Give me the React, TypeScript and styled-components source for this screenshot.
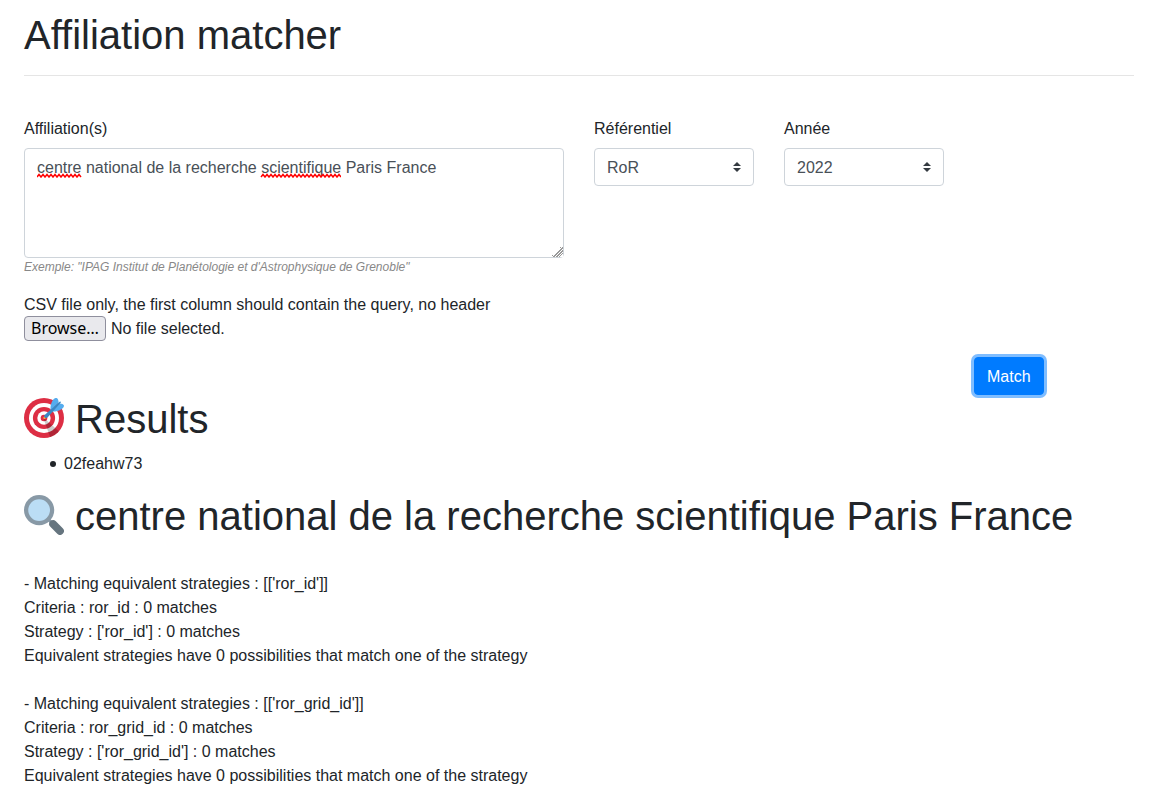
import React, { useState } from "react";
import styled, { createGlobalStyle } from "styled-components";

const GlobalStyle = createGlobalStyle`
  *, *::before, *::after { box-sizing: border-box; }
  body {
    margin: 0;
    background: #fff;
    color: #212529;
    font-family: "Liberation Sans", Arial, sans-serif;
    font-size: 16px;
    line-height: 24px;
  }
`;

const Page = styled.main`
  max-width: 1158px;
  padding: 11px 24px 0;
`;

const Title = styled.h1`
  margin: 0 0 8px;
  font-size: 40px;
  font-weight: 500;
  line-height: 48px;
`;

const IconTitle = styled(Title)`
  display: flex;
  align-items: center;
  gap: 11px;
`;

const TitleIcon = styled.svg`
  flex: none;
  width: 40px;
  height: 40px;
  margin-bottom: 2px;
`;

const Divider = styled.hr`
  margin: 16px 0 41px;
  border: 0;
  border-top: 1px solid rgba(0, 0, 0, 0.1);
`;

const FormGrid = styled.form`
  display: grid;
  grid-template-columns: repeat(12, minmax(0, 1fr));
  column-gap: 30px;
  row-gap: 16px;
`;

const Cell = styled.div<{ $span: number; $start?: number }>`
  grid-column: ${(p) => (p.$start ? `${p.$start} / ` : "")}span ${(p) => p.$span};
`;

const FileCell = styled(Cell)`
  padding-top: 1px;
`;

const ActionRow = styled.div`
  grid-column: 1 / -1;
  display: grid;
  grid-template-columns: subgrid;
`;

const Label = styled.label`
  display: block;
  margin-bottom: 7px;
`;

const TextWrap = styled.div`
  position: relative;
`;

const TextArea = styled.textarea`
  display: block;
  width: 100%;
  height: 110px;
  padding: 7px 12px 5px;
  border: 1px solid #ced4da;
  border-radius: 4px;
  background: #fff;
  color: #495057;
  font: inherit;
  resize: vertical;

  &::-webkit-resizer {
    background:
      linear-gradient(315deg, #fff 1px, transparent 1px),
      linear-gradient(135deg, #fff 60%, transparent 60%),
      repeating-linear-gradient(135deg, #999 0 1px, #fff 1px 2px);
  }
`;

const SpellMarks = styled.svg`
  position: absolute;
  top: 25px;
  left: 13px;
  width: 304px;
  height: 5px;
  pointer-events: none;
`;

const Hint = styled.small`
  display: block;
  color: #888;
  font-size: 12px;
  font-style: italic;
  line-height: 18px;
`;

const SelectWrap = styled.div`
  position: relative;
`;

const Select = styled.select`
  display: block;
  width: 100%;
  height: 38px;
  padding: 7px 28px 5px 12px;
  border: 1px solid #ced4da;
  border-radius: 4px;
  background: #fff;
  color: #495057;
  font: inherit;
  appearance: none;
`;

const SelectArrows = styled.svg`
  position: absolute;
  top: 14px;
  right: 13px;
  width: 8px;
  height: 10px;
  pointer-events: none;
`;

const FileRow = styled.div`
  display: flex;
  align-items: flex-end;
  gap: 5px;
  height: 24px;
`;

const BrowseLabel = styled.label`
  height: 25px;
  padding: 0 6px;
  border: 1px solid #8f8f9d;
  border-radius: 4px;
  background: #e9e9ed;
  color: #000;
  font-family: "Noto Sans", sans-serif;
  line-height: 23px;
`;

const FileInput = styled.input`
  position: absolute;
  width: 1px;
  height: 1px;
  opacity: 0;
`;

const MatchButton = styled.button`
  grid-column: 11 / span 2;
  justify-self: start;
  height: 38px;
  padding: 7px 12px 5px;
  border: 1px solid #007bff;
  border-radius: 4px;
  background: #007bff;
  box-shadow: 0 0 0 3px rgba(0, 123, 255, 0.5);
  color: #fff;
  font: inherit;
`;

const ResultList = styled.ul`
  margin: 0 0 16px;
  padding: 1px 0 0 26px;
  list-style: none;
`;

const ResultItem = styled.li`
  display: flex;
  align-items: center;
  gap: 8px;

  &::before {
    content: "";
    width: 6px;
    height: 6px;
    border-radius: 50%;
    background: #212529;
  }
`;

const Report = styled.section`
  padding-bottom: 8px;
  display: flow-root;
`;

const Strategy = styled.p`
  margin: 24px 0 0;
`;

const Line = styled.span`
  display: block;
`;

function DartIcon() {
  return (
    <TitleIcon viewBox="0 0 36 36" aria-hidden="true">
      <circle fill="#DD2E44" cx="18" cy="18" r="18" />
      <circle fill="#FFF" cx="18" cy="18" r="13.5" />
      <circle fill="#DD2E44" cx="18" cy="18" r="10" />
      <circle fill="#FFF" cx="18" cy="18" r="6" />
      <circle fill="#DD2E44" cx="18" cy="18" r="3" />
      <path opacity=".2" d="M18.24 18.282l13.144 11.754s-2.647 3.376-7.89 5.109L17.579 18.42l.661-.138z" />
      <path fill="#FFAC33" d="M18.294 19c-.255 0-.509-.097-.704-.292-.389-.389-.389-1.018 0-1.407l.563-.563c.389-.389 1.018-.389 1.408 0 .388.389.388 1.018 0 1.407l-.564.563c-.194.195-.448.292-.703.292z" />
      <path fill="#55ACEE" d="M24.016 6.981c-.403 2.079 0 4.691 0 4.691l7.054-7.388c.291-1.454-.528-3.932-1.718-4.238-1.19-.306-4.079.803-5.336 6.935zm5.003 5.003c-2.079.403-4.691 0-4.691 0l7.388-7.054c1.454-.291 3.932.528 4.238 1.718.306 1.19-.803 4.079-6.935 5.336z" />
      <path fill="#3A87C2" d="M32.798 4.485L21.176 17.587c-.362.362-1.673.882-2.51.046-.836-.836-.419-2.08-.057-2.443L31.815 3.501s.676-.635 1.159-.152-.176 1.136-.176 1.136z" />
    </TitleIcon>
  );
}

function MagnifierIcon() {
  return (
    <TitleIcon viewBox="0 0 36 36" aria-hidden="true">
      <path stroke="#8899A6" strokeWidth="3" d="M21 21l5 5" />
      <path stroke="#66757F" strokeWidth="7" strokeLinecap="round" d="M26.200 26.200l6.200 6.200" />
      <circle fill="#8899A6" cx="13.600" cy="13.600" r="13.600" />
      <circle fill="#BBDDF5" cx="13.600" cy="13.600" r="9.800" />
    </TitleIcon>
  );
}

function zigzag(from: number, to: number) {
  let d = `M${from} 4`;
  for (let x = from + 2, up = true; x <= to; x += 2, up = !up) d += `L${x} ${up ? 1.5 : 4}`;
  return d;
}

function Picker({ id, label, options }: { id: string; label: string; options: string[] }) {
  return (
    <Cell $span={2}>
      <Label htmlFor={id}>{label}</Label>
      <SelectWrap>
        <Select id={id}>
          {options.map((o) => (
            <option key={o}>{o}</option>
          ))}
        </Select>
        <SelectArrows viewBox="0 0 4 5" aria-hidden="true">
          <path fill="#343a40" d="M2 0L0 2h4zm0 5L0 3h4z" />
        </SelectArrows>
      </SelectWrap>
    </Cell>
  );
}

const QUERY = "centre national de la recherche scientifique Paris France";
const CRITERIA = ["ror_id", "ror_grid_id"];

export default function App() {
  const [query, setQuery] = useState(QUERY);
  const [fileName, setFileName] = useState("No file selected.");

  return (
    <>
      <GlobalStyle />
      <Page>
        <Title>Affiliation matcher</Title>
        <Divider />
        <FormGrid onSubmit={(e) => e.preventDefault()}>
          <Cell $span={6}>
            <Label htmlFor="affiliations">Affiliation(s)</Label>
            <TextWrap>
              <TextArea
                id="affiliations"
                spellCheck={false}
                value={query}
                onChange={(e) => setQuery(e.target.value)}
              />
              {query === QUERY && (
                <SpellMarks aria-hidden="true">
                  <path fill="none" stroke="#f00" strokeWidth="1.5" d={zigzag(0, 44)} />
                  <path fill="none" stroke="#f00" strokeWidth="1.5" d={zigzag(224, 304)} />
                </SpellMarks>
              )}
            </TextWrap>
            <Hint>Exemple: "IPAG Institut de Planétologie et d'Astrophysique de Grenoble"</Hint>
          </Cell>
          <Picker id="referentiel" label="Référentiel" options={["RoR", "Grid", "RNSR"]} />
          <Picker id="annee" label="Année" options={["2022", "2021", "2020"]} />
          <FileCell $span={6} $start={1}>
            CSV file only, the first column should contain the query, no header
            <FileRow>
              <FileInput
                id="csv"
                type="file"
                accept=".csv"
                onChange={(e) => setFileName(e.target.files?.[0]?.name ?? "No file selected.")}
              />
              <BrowseLabel htmlFor="csv">Browse…</BrowseLabel>
              <span>{fileName}</span>
            </FileRow>
          </FileCell>
          <ActionRow>
            <MatchButton type="submit">Match</MatchButton>
          </ActionRow>
        </FormGrid>
        <IconTitle as="h2">
          <DartIcon />
          Results
        </IconTitle>
        <ResultList>
          <ResultItem>02feahw73</ResultItem>
        </ResultList>
        <IconTitle as="h2">
          <MagnifierIcon />
          {QUERY}
        </IconTitle>
        <Report>
          {CRITERIA.map((c) => (
            <Strategy key={c}>
              <Line>{`- Matching equivalent strategies : [['${c}']]`}</Line>
              <Line>{`Criteria : ${c} : 0 matches`}</Line>
              <Line>{`Strategy : ['${c}'] : 0 matches`}</Line>
              <Line>Equivalent strategies have 0 possibilities that match one of the strategy</Line>
            </Strategy>
          ))}
        </Report>
      </Page>
    </>
  );
}
